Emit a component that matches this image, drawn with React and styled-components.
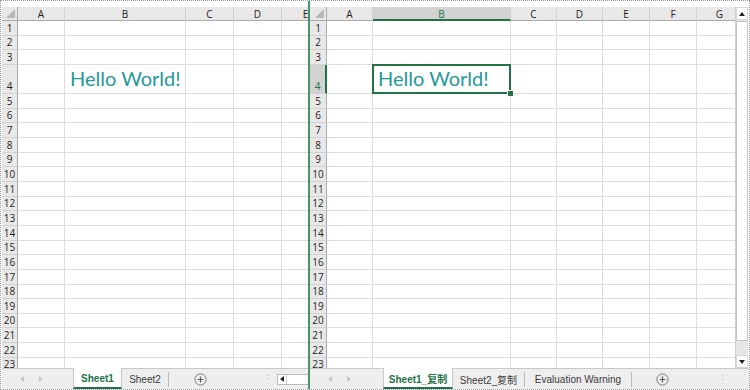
import React from "react";
import styled, { createGlobalStyle, css } from "styled-components";

const GREEN = "#217346";
const LINE = "#dcdcdc";
const HEAD = "#e8e8e8";

const GlobalStyle = createGlobalStyle`
  html, body { margin: 0; padding: 0; background: #fff; }
  body { font-family: "Liberation Sans", "Noto Sans CJK SC", sans-serif; }
`;

const Frame = styled.div`
  width: 750px;
  height: 390px;
  box-sizing: border-box;
  border: 1px dotted #9a9a9a;
  display: flex;
  background: #fff;
  overflow: hidden;
`;

const Pane = styled.div`
  display: flex;
  flex-direction: column;
  flex: ${p => (p.$width ? "none" : "1")};
  width: ${p => (p.$width ? `${p.$width}px` : "auto")};
  min-width: 0;
  padding-top: 6px;
  padding-left: ${p => p.$padLeft || 0}px;
  box-sizing: border-box;
`;

const Divider = styled.div`
  width: 2px;
  flex: none;
  background: #4a9468;
`;

const Body = styled.div`
  flex: 1;
  min-height: 0;
  display: flex;
  overflow: hidden;
`;

const Grid = styled.div`
  flex: 1;
  min-width: 0;
  overflow: hidden;
  display: grid;
  grid-template-columns: ${p => p.$cols};
  grid-template-rows: 14px repeat(3, 14.67px) 29px repeat(19, 14.67px);
  font-family: "Open Sans", "Liberation Sans", sans-serif;
  font-size: 10px;
`;

const Corner = styled.div`
  position: relative;
  background: ${HEAD};
  border-right: 1px solid #ababab;
  border-bottom: 1px solid #ababab;
  box-sizing: border-box;
  &::after {
    content: "";
    position: absolute;
    right: 2px;
    bottom: 2px;
    width: 0;
    height: 0;
    border-style: solid;
    border-width: 0 0 9px 9px;
    border-color: transparent transparent #b7b7b7 transparent;
  }
`;

const ColHead = styled.div`
  display: flex;
  align-items: center;
  justify-content: center;
  box-sizing: border-box;
  background: ${p => (p.$active ? "#d2d2d2" : HEAD)};
  border-right: 1px solid #d2d2d2;
  border-bottom: ${p => (p.$active ? `2px solid ${GREEN}` : "1px solid #ababab")};
  color: ${p => (p.$active ? GREEN : "#1e1e1e")};
  line-height: 1;
  padding-top: ${p => (p.$active ? 1 : 0)}px;
`;

const RowHead = styled.div`
  display: flex;
  align-items: flex-end;
  justify-content: center;
  box-sizing: border-box;
  padding-bottom: 1px;
  background: ${p => (p.$active ? "#d2d2d2" : HEAD)};
  border-right: ${p => (p.$active ? `2px solid ${GREEN}` : "1px solid #ababab")};
  border-bottom: 1px solid #d2d2d2;
  color: ${p => (p.$active ? GREEN : "#1e1e1e")};
  line-height: 12px;
`;

const Cell = styled.div`
  position: relative;
  display: flex;
  align-items: flex-end;
  box-sizing: border-box;
  border-right: 1px solid ${LINE};
  border-bottom: 1px solid ${LINE};
  white-space: nowrap;
  ${p =>
    p.$selected &&
    css`
      z-index: 2;
      &::after {
        content: "";
        position: absolute;
        left: -1px;
        top: -1px;
        right: -1px;
        bottom: -1px;
        border: 2px solid ${GREEN};
        pointer-events: none;
      }
      &::before {
        content: "";
        position: absolute;
        right: -4px;
        bottom: -4px;
        width: 5px;
        height: 5px;
        background: ${GREEN};
        border: 1px solid #fff;
        z-index: 3;
      }
    `}
`;

const Hello = styled.span`
  font-family: Lato, "Liberation Sans", sans-serif;
  font-size: 20px;
  line-height: 1;
  color: #24999a;
  padding: 0 0 5px 5px;
`;

const VScroll = styled.div`
  width: 13px;
  flex: none;
  margin-right: 1px;
  display: flex;
  flex-direction: column;
  background: #e6e6e6;
  border-left: 1px solid #d0d0d0;
  box-sizing: border-box;
`;

const ScrollBtn = styled.div`
  height: 13px;
  flex: none;
  display: flex;
  align-items: center;
  justify-content: center;
  background: #fff;
  border: 1px solid #d6d6d6;
  box-sizing: border-box;
  margin-top: ${p => (p.$bottom ? "auto" : "0")};
`;

const Thumb = styled.div`
  height: 320px;
  flex: none;
  margin: 1px 0 0;
  background: #fff;
  border: 1px solid #c4c4c4;
  box-sizing: border-box;
`;

const TabBar = styled.div`
  height: 21px;
  flex: none;
  display: flex;
  align-items: stretch;
  background: #eeeeee;
  border-top: 1px solid #c8c8c8;
  box-sizing: border-box;
  font-size: 10px;
`;

const Nav = styled.div`
  width: ${p => p.$w}px;
  flex: none;
  display: flex;
  align-items: center;
  gap: 15px;
  padding-left: 18px;
  box-sizing: border-box;
`;

const Arrow = styled.span`
  width: 0;
  height: 0;
  border-style: solid;
  border-color: transparent;
  border-width: 3px 0;
  ${p =>
    p.$dir === "left"
      ? css`border-right: 4px solid ${p.$dark ? "#222" : "#c6c6c6"};`
      : css`border-left: 4px solid ${p.$dark ? "#222" : "#c6c6c6"};`}
`;

const VArrow = styled.span`
  width: 0;
  height: 0;
  border-left: 3px solid transparent;
  border-right: 3px solid transparent;
  ${p =>
    p.$up
      ? css`border-bottom: 4px solid #222;`
      : css`border-top: 4px solid #222;`}
`;

const Tab = styled.div`
  width: ${p => p.$w}px;
  flex: none;
  display: flex;
  align-items: center;
  justify-content: center;
  box-sizing: border-box;
  white-space: nowrap;
  color: #3a3a3a;
  ${p =>
    p.$active &&
    css`
      margin-top: -1px;
      background: #fff;
      color: ${GREEN};
      font-weight: 700;
      border-left: 1px solid #c8c8c8;
      border-right: 1px solid #c8c8c8;
      border-bottom: 2px solid ${GREEN};
      padding-top: 1px;
    `}
`;

const TabSep = styled.div`
  width: 1px;
  flex: none;
  margin: 3px 0 2px;
  background: #bcbcbc;
`;

const AddBtn = styled.div`
  flex: none;
  display: flex;
  align-items: center;
  margin-left: ${p => p.$ml}px;
`;

const Dots = styled.div`
  flex: none;
  display: flex;
  align-items: center;
  margin-left: ${p => p.$ml}px;
`;

const HScroll = styled.div`
  flex: none;
  width: 31px;
  height: 11px;
  align-self: center;
  display: flex;
  background: #fff;
  border: 1px solid #bdbdbd;
  border-right: none;
  box-sizing: border-box;
  margin-left: auto;
`;

const HScrollBtn = styled.div`
  width: 8px;
  display: flex;
  align-items: center;
  justify-content: center;
  border-right: 1px solid #d0d0d0;
`;

const PlusIcon = () => (
  <svg width="13" height="13" viewBox="0 0 13 13">
    <circle cx="6.5" cy="6.5" r="5.6" fill="none" stroke="#7a7a7a" strokeWidth="1" />
    <path d="M6.5 3.6v5.8M3.6 6.5h5.8" stroke="#5a5a5a" strokeWidth="1.2" />
  </svg>
);

const DotsIcon = () => (
  <svg width="3" height="11" viewBox="0 0 3 11">
    <rect x="1" y="1" width="1" height="1" fill="#bdbdbd" />
    <rect x="1" y="5" width="1" height="1" fill="#bdbdbd" />
    <rect x="1" y="9" width="1" height="1" fill="#bdbdbd" />
  </svg>
);

const ROWS = Array.from({ length: 23 }, (_, i) => i + 1);

function Sheet({ cols, letters, selected }) {
  const template = cols.map(c => `${c}px`).join(" ");
  return (
    <Grid $cols={template}>
      <Corner />
      {letters.map(l => (
        <ColHead key={l} $active={selected && l === "B"}>{l}</ColHead>
      ))}
      {ROWS.map(r => (
        <React.Fragment key={r}>
          <RowHead $active={selected && r === 4}>{r}</RowHead>
          {letters.map(l => (
            <Cell key={l} $selected={selected && r === 4 && l === "B"}>
              {r === 4 && l === "B" && <Hello>Hello World!</Hello>}
            </Cell>
          ))}
        </React.Fragment>
      ))}
    </Grid>
  );
}

export default function App() {
  return (
    <>
      <GlobalStyle />
      <Frame>
        <Pane $width={307} $padLeft={1}>
          <Body>
            <Sheet cols={[16, 47, 121, 48, 48, 48]} letters={["A", "B", "C", "D", "E"]} />
          </Body>
          <TabBar>
            <Nav $w={71}>
              <Arrow $dir="left" />
              <Arrow $dir="right" />
            </Nav>
            <Tab $w={49} $active>Sheet1</Tab>
            <Tab $w={46}>Sheet2</Tab>
            <TabSep />
            <AddBtn $ml={25}><PlusIcon /></AddBtn>
            <Dots $ml={59}><DotsIcon /></Dots>
            <HScroll>
              <HScrollBtn><Arrow $dir="left" $dark /></HScrollBtn>
            </HScroll>
          </TabBar>
        </Pane>
        <Divider />
        <Pane>
          <Body>
            <Sheet
              cols={[17, 46, 138, 46, 46, 47, 47, 46]}
              letters={["A", "B", "C", "D", "E", "F", "G"]}
              selected
            />
            <VScroll>
              <ScrollBtn><VArrow $up /></ScrollBtn>
              <Thumb />
              <ScrollBtn $bottom><VArrow /></ScrollBtn>
            </VScroll>
          </Body>
          <TabBar>
            <Nav $w={73}>
              <Arrow $dir="left" />
              <Arrow $dir="right" />
            </Nav>
            <Tab $w={70} $active>Sheet1_复制</Tab>
            <Tab $w={71}>Sheet2_复制</Tab>
            <TabSep />
            <Tab $w={106}>Evaluation Warning</Tab>
            <TabSep />
            <AddBtn $ml={24}><PlusIcon /></AddBtn>
            <Dots $ml={52}><DotsIcon /></Dots>
          </TabBar>
        </Pane>
      </Frame>
    </>
  );
}
